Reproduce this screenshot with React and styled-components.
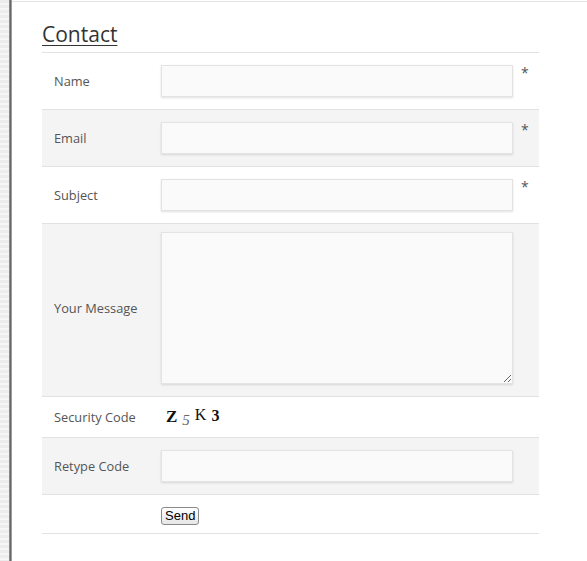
import React from "react";
import styled, { createGlobalStyle } from "styled-components";

const GlobalStyle = createGlobalStyle`
    html, body {
        margin: 0;
        padding: 0;
        background: #fff;
    }
    body {
        font-family: "Open Sans", "Liberation Sans", sans-serif;
    }
`;

const Page = styled.div`
    display: flex;
    min-height: 561px;
`;

const Strip = styled.div`
    width: 9px;
    flex-shrink: 0;
    background: repeating-linear-gradient(
        180deg,
        #ececec 0px,
        #ececec 3px,
        #f6f6f6 3px,
        #f6f6f6 5px
    );
`;

const Edge = styled.div`
    width: 3px;
    flex-shrink: 0;
    background: linear-gradient(90deg, #9a9a9a, #5e5e5e 60%, #c8c8c8);
`;

const Main = styled.main`
    flex: 1;
    margin-top: 1px;
    border-top: 1px solid #e4e4e4;
    padding: 0 0 0 30px;
`;

const Title = styled.h2`
    margin: 0;
    padding: 18px 0 4px;
    font-size: 21px;
    font-weight: 400;
    line-height: 28px;
    color: #333;
    text-decoration: underline;
    text-decoration-thickness: 1px;
    text-underline-offset: 3px;
`;

const Form = styled.form`
    width: 497px;
    border-top: 1px solid #e2e2e2;
    border-bottom: 1px solid #e2e2e2;
`;

const Row = styled.div`
    display: grid;
    grid-template-columns: 119px 352px 1fr;
    align-items: center;
    min-height: ${p => p.$h}px;
    box-sizing: border-box;
    padding: ${p => p.$pad || "0"};
    background: ${p => (p.$alt ? "#f4f4f4" : "#fff")};
    & + & {
        border-top: 1px solid #e2e2e2;
    }
`;

const Label = styled.label`
    padding-left: 12px;
    font-size: 12.8px;
    color: #555;
`;

const Input = styled.input`
    box-sizing: border-box;
    width: 352px;
    height: 32px;
    margin: 0;
    border: 1px solid #e3e3e3;
    background: #fafafa;
    box-shadow: 0 1px 2px rgba(0, 0, 0, 0.12);
    font-family: inherit;
    font-size: 13px;
    outline: none;
`;

const TextArea = styled.textarea`
    box-sizing: border-box;
    display: block;
    width: 352px;
    height: 152px;
    margin: 0;
    border: 1px solid #e3e3e3;
    background: #fafafa;
    box-shadow: 0 1px 2px rgba(0, 0, 0, 0.12);
    font-family: inherit;
    font-size: 13px;
    outline: none;
`;

const Required = styled.span`
    align-self: start;
    padding: 1px 0 0 8px;
    font-size: 14px;
    line-height: 14px;
    color: #555;
`;

const Captcha = styled.div`
    padding-left: 5px;
    font-family: "Liberation Serif", serif;
    color: #111;
    display: flex;
    align-items: baseline;
    gap: 5px;
`;

const Glyph = styled.span`
    font-size: ${p => p.$size}px;
    font-weight: ${p => (p.$bold ? 700 : 400)};
    font-style: ${p => (p.$italic ? "italic" : "normal")};
    color: ${p => p.$color || "#111"};
    position: relative;
    top: ${p => p.$shift || 0}px;
`;

const SendButton = styled.button`
    font-family: "Liberation Sans", Arial, sans-serif;
    font-size: 13px;
    line-height: 16px;
    padding: 0 3px;
    height: 18px;
    border: 1px solid #8a8a8a;
    border-radius: 3px;
    background: linear-gradient(#ffffff, #e6e6e6);
    color: #000;
    justify-self: start;
`;

const fields = [
    { label: "Name", req: true },
    { label: "Email", req: true },
    { label: "Subject", req: true },
];

export default function App() {
    return (
        <>
            <GlobalStyle />
            <Page>
                <Strip />
                <Edge />
                <Main>
                    <Title>Contact</Title>
                    <Form onSubmit={e => e.preventDefault()}>
                        {fields.map((f, i) => (
                            <Row key={f.label} $h={56} $alt={i % 2 === 1} $pad="12px 0">
                                <Label>{f.label}</Label>
                                <Input type="text" />
                                {f.req && <Required>*</Required>}
                            </Row>
                        ))}
                        <Row $h={172} $alt $pad="8px 0 12px">
                            <Label>Your Message</Label>
                            <TextArea />
                        </Row>
                        <Row $h={41}>
                            <Label>Security Code</Label>
                            <Captcha>
                                <Glyph $size={17} $bold>Z</Glyph>
                                <Glyph $size={15} $italic $color="#666" $shift={3}>5</Glyph>
                                <Glyph $size={16} $shift={-2}>K</Glyph>
                                <Glyph $size={16} $bold $shift={-1}>3</Glyph>
                            </Captcha>
                        </Row>
                        <Row $h={56} $alt $pad="12px 0">
                            <Label>Retype Code</Label>
                            <Input type="text" />
                        </Row>
                        <Row $h={39} $pad="12px 0 8px">
                            <span />
                            <SendButton type="submit">Send</SendButton>
                        </Row>
                    </Form>
                </Main>
            </Page>
        </>
    );
}
